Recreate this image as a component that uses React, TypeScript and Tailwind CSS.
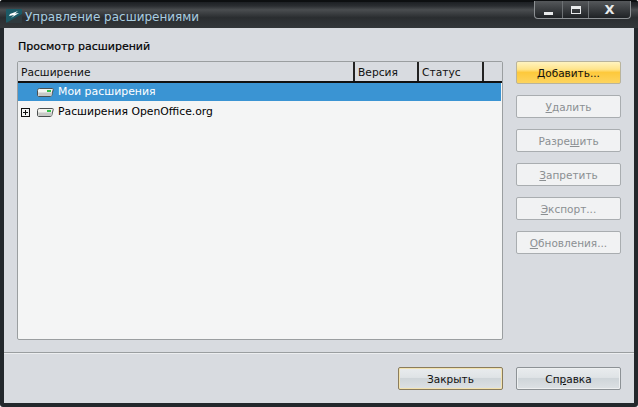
import React from "react";

const Drive = () => (
  <svg width="17" height="9" viewBox="0 0 17 9" className="shrink-0">
    <path d="M2.5 0.5H15.5C16.2 0.5 16.4 1 16.2 1.6L14.8 7.2C14.6 8 14.2 8.5 13.4 8.5H2C1 8.5 0.5 8 0.5 7V2.5C0.5 1.3 1.3 0.5 2.5 0.5Z" fill="#f4f5f0" stroke="#4a4f50" />
    <path d="M1 4.5H15.3L14.4 8H1.5Z" fill="#c6c9c6" />
    <rect x="10" y="2" width="4" height="2" fill="#35c24a" />
  </svg>
);

const SideButton = ({ children, primary }: { children: React.ReactNode; primary?: boolean }) => (
  <button
    className={
      primary
        ? "w-[105px] h-[23px] pt-[2px] rounded-[2px] border border-[#b9b49c] text-[10.5px] leading-[13px] text-[#111] bg-[linear-gradient(#fff3c0_0%,#ffe48a_35%,#fdc93c_50%,#fdd45e_100%)]"
        : "w-[105px] h-[23px] pt-[2px] rounded-[2px] border border-[#a9adb0] text-[10.5px] leading-[13px] text-[#8b8f92] bg-[#f1f2f3]"
    }
  >
    {children}
  </button>
);

const BottomButton = ({ children, active }: { children: React.ReactNode; active?: boolean }) => (
  <button
    className={
      active
        ? "w-[105px] h-[23px] pt-[2px] rounded-[2px] border border-[#8a7c5c] shadow-[inset_0_0_0_1px_#f3e3b0] text-[10.5px] leading-[13px] text-[#111] bg-[linear-gradient(#e9ecee_0%,#dfe3e6_45%,#cfd5d9_50%,#dde1e4_100%)]"
        : "w-[105px] h-[23px] pt-[2px] rounded-[2px] border border-[#8d9296] shadow-[inset_0_0_0_1px_#eef0f1] text-[10.5px] leading-[13px] text-[#111] bg-[linear-gradient(#e9ecee_0%,#dfe3e6_45%,#cfd5d9_50%,#dde1e4_100%)]"
    }
  >
    {children}
  </button>
);

export default function App() {
  return (
    <div className="w-[638px] h-[407px] rounded-[3px] flex flex-col bg-[#23282c] font-['DejaVu_Sans',sans-serif] overflow-hidden">
      {/* title bar */}
      <div className="h-[28px] flex items-start shrink-0 bg-[linear-gradient(#1d2024_0%,#2a2d31_15%,#4a4d50_30%,#2a2d30_60%,#33373a_100%)] border-t-2 border-[#0d0f11]">
        <svg width="16" height="14" viewBox="0 0 16 14" className="ml-[6px] mt-[7px] shrink-0">
          <rect width="16" height="14" rx="1" fill="#1c5a66" />
          <path d="M0 14L16 5V14Z" fill="#2f3a3e" />
          <path d="M4 5L12 2L9 4.5L13 4L5 9L8 6L3 7Z" fill="#fff" />
        </svg>
        <span className="ml-[3px] mt-[7px] text-[12px] leading-[16px] text-[#a9cde0]">Управление расширениями</span>
        <div className="ml-auto mr-[7px] -mt-[1px] flex h-[18px] w-[97px] rounded-b-[4px] border border-t-0 border-[#8d9194] bg-[linear-gradient(#55585b,#1f2225)]">
          <div className="w-[28px] flex items-end justify-center pb-[3px] border-r border-[#6d7174]">
            <div className="w-[9px] h-[3px] bg-[#e8eaeb]" />
          </div>
          <div className="w-[26px] flex items-center justify-center border-r border-[#6d7174]">
            <div className="w-[10px] h-[8px] border border-t-[3px] border-[#e8eaeb]" />
          </div>
          <div className="flex-1 flex items-center justify-center text-[13px] font-bold leading-none text-[#e8eaeb]">X</div>
        </div>
      </div>

      {/* dialog body */}
      <div className="flex-1 min-h-0 flex flex-col ml-[4px] mr-[4px] mb-[4px] bg-[#d8dbe0]">
        <div className="h-[324px] shrink-0 flex pl-[13px] pt-[12px]">
          <div className="w-[486px] flex flex-col">
            <div className="pl-[1px] text-[11px] leading-[13px] text-black h-[21px] [-webkit-text-stroke:0.2px_black]">Просмотр расширений</div>
            <div className="h-[279px] border border-[#9a9ea0] rounded-[2px] bg-[#f4f5f5] flex flex-col">
              <div className="h-[21px] shrink-0 flex border-b-2 border-[#111] bg-[#d8dbe0] text-[10.7px] leading-[21px] text-[#111]">
                <div className="w-[337px] pl-[3px] border-r-2 border-[#222]">Расширение</div>
                <div className="w-[64px] pl-[3px] border-r-2 border-[#222]">Версия</div>
                <div className="w-[65px] pl-[3px] border-r-2 border-[#222]">Статус</div>
              </div>
              <div className="h-[18px] mr-[1px] flex items-center pl-[19px] bg-[#3a94d3] text-white text-[10.9px]">
                <Drive />
                <span className="ml-[4px]">Мои расширения</span>
              </div>
              <div className="h-[22px] flex items-center pl-[3px] text-[10.8px] text-black">
                <div className="w-[9px] h-[9px] border border-[#111] relative shrink-0 mr-[7px]">
                  <div className="absolute left-[1px] right-[1px] top-[3px] h-px bg-[#111]" />
                  <div className="absolute top-[1px] bottom-[1px] left-[3px] w-px bg-[#111]" />
                </div>
                <Drive />
                <span className="ml-[4px]">Расширения OpenOffice.org</span>
              </div>
            </div>
          </div>
          <div className="ml-[13px] pt-[21px] flex flex-col gap-[11px]">
            <SideButton primary><u>Д</u>обавить...</SideButton>
            <SideButton><u>У</u>далить</SideButton>
            <SideButton>Разре<u>ш</u>ить</SideButton>
            <SideButton><u>З</u>апретить</SideButton>
            <SideButton><u>Э</u>кспорт...</SideButton>
            <SideButton><u>О</u>бновления...</SideButton>
          </div>
        </div>
        <div className="h-[2px] shrink-0 border-t border-[#9a9ea0] bg-[#eceef0]" />
        <div className="flex justify-end gap-[13px] pt-[13px] pr-[13px]">
          <BottomButton active>Закрыть</BottomButton>
          <BottomButton>Сп<u>р</u>авка</BottomButton>
        </div>
      </div>
    </div>
  );
}
